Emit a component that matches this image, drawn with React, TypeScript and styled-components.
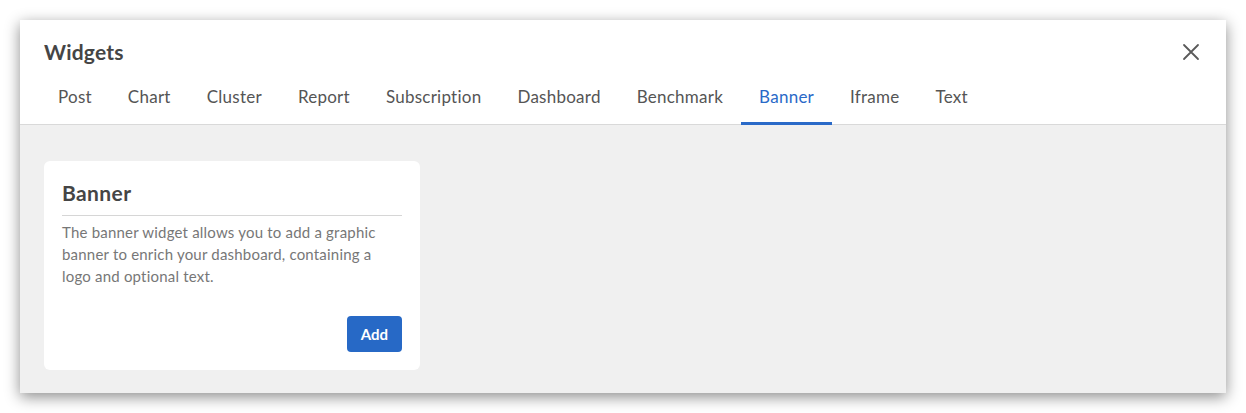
import styled, { createGlobalStyle } from "styled-components";

const GlobalStyle = createGlobalStyle`
  html, body {
    margin: 0;
    padding: 0;
    background: #ffffff;
  }
  body {
    font-family: Lato, "Liberation Sans", sans-serif;
  }
`;

const Page = styled.div`
  padding: 20px;
  width: 1206px;
`;

const Dialog = styled.div`
  background: #ffffff;
  box-shadow: 0 4px 14px rgba(0, 0, 0, 0.45);
  display: flex;
  flex-direction: column;
  height: 373px;
  overflow: hidden;
`;

const Header = styled.div`
  display: flex;
  flex-direction: column;
  border-bottom: 1px solid #d9d9d9;
`;

const TitleRow = styled.div`
  display: flex;
  align-items: center;
  justify-content: space-between;
  padding: 17px 20px 0 24px;
`;

const Title = styled.h2`
  margin: 0;
  font-size: 21px;
  font-weight: 700;
  letter-spacing: 0.2px;
  color: #454545;
  line-height: 24px;
`;

const CloseButton = styled.button`
  border: 0;
  background: transparent;
  padding: 6px;
  display: flex;
  cursor: pointer;
`;

const Tabs = styled.div`
  display: flex;
  padding-left: 20px;
`;

const Tab = styled.div<{ $active?: boolean }>`
  box-sizing: border-box;
  height: 58px;
  padding: 3px 18px 0;
  display: flex;
  align-items: center;
  font-size: 17px;
  letter-spacing: 0.25px;
  color: ${(p) => (p.$active ? "#2a6ac8" : "#555555")};
  border-bottom: 3px solid ${(p) => (p.$active ? "#2a6ac8" : "transparent")};
  margin-bottom: -1px;
`;

const Body = styled.div`
  flex: 1;
  background: #f0f0f0;
  padding: 36px 24px 0;
`;

const Card = styled.div`
  width: 376px;
  height: 209px;
  box-sizing: border-box;
  background: #ffffff;
  border-radius: 6px;
  padding: 18px;
  display: flex;
  flex-direction: column;
`;

const CardTitle = styled.h3`
  margin: 0;
  font-size: 21px;
  font-weight: 700;
  letter-spacing: 0.4px;
  color: #454545;
  line-height: 26px;
  padding: 1px 0 9px;
  border-bottom: 1px solid #d6d6d6;
`;

const CardText = styled.p`
  margin: 5px 0 0;
  font-size: 15px;
  line-height: 22px;
  letter-spacing: 0.2px;
  color: #777777;
`;

const Actions = styled.div`
  margin-top: auto;
  display: flex;
  justify-content: flex-end;
`;

const AddButton = styled.button`
  background: #2769c6;
  color: #ffffff;
  border: 0;
  border-radius: 4px;
  height: 36px;
  padding: 0 14px;
  font-family: inherit;
  font-size: 15px;
  font-weight: 700;
  cursor: pointer;
`;

const tabs = [
  "Post",
  "Chart",
  "Cluster",
  "Report",
  "Subscription",
  "Dashboard",
  "Benchmark",
  "Banner",
  "Iframe",
  "Text",
];

export default function App() {
  return (
    <Page>
      <GlobalStyle />
      <Dialog>
        <Header>
          <TitleRow>
            <Title>Widgets</Title>
            <CloseButton aria-label="Close">
              <svg width="18" height="18" viewBox="0 0 18 18">
                <path
                  d="M2 2 L16 16 M16 2 L2 16"
                  stroke="#5a5a5a"
                  strokeWidth="1.8"
                  strokeLinecap="round"
                />
              </svg>
            </CloseButton>
          </TitleRow>
          <Tabs>
            {tabs.map((t) => (
              <Tab key={t} $active={t === "Banner"}>
                {t}
              </Tab>
            ))}
          </Tabs>
        </Header>
        <Body>
          <Card>
            <CardTitle>Banner</CardTitle>
            <CardText>
              The banner widget allows you to add a graphic banner to enrich
              your dashboard, containing a logo and optional text.
            </CardText>
            <Actions>
              <AddButton>Add</AddButton>
            </Actions>
          </Card>
        </Body>
      </Dialog>
    </Page>
  );
}
